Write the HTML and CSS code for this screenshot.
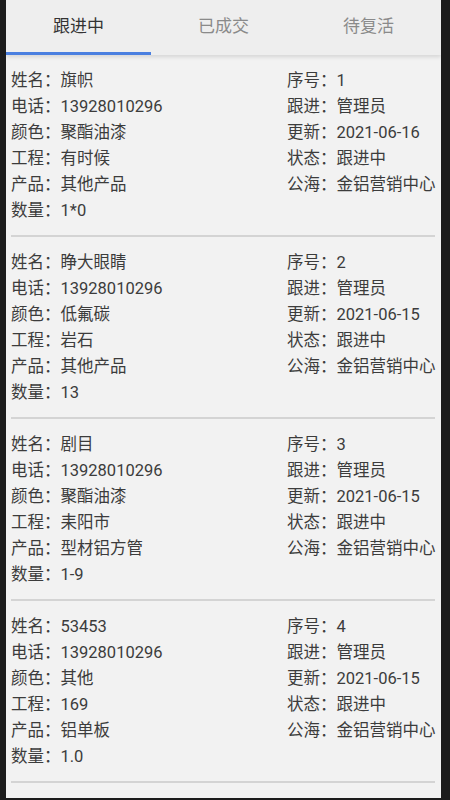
FILE: index.html
```html
<!DOCTYPE html>
<html lang="zh-CN">
<head>
    <meta charset="UTF-8">
    <meta name="viewport" content="width=device-width, initial-scale=1.0">
    <title>客户跟进</title>
    <link rel="stylesheet" href="styles.css">
</head>
<body>
    <div class="screen">
        <header class="tabs">
            <div class="tab active">跟进中</div>
            <div class="tab">已成交</div>
            <div class="tab">待复活</div>
        </header>

        <main class="list">
            <div class="card">
                <div class="col col-left">
                    <p>姓名：旗帜</p>
                    <p>电话：13928010296</p>
                    <p>颜色：聚酯油漆</p>
                    <p>工程：有时候</p>
                    <p>产品：其他产品</p>
                    <p>数量：1*0</p>
                </div>
                <div class="col col-right">
                    <p>序号：1</p>
                    <p>跟进：管理员</p>
                    <p>更新：2021-06-16</p>
                    <p>状态：跟进中</p>
                    <p>公海：金铝营销中心</p>
                </div>
            </div>

            <div class="card">
                <div class="col col-left">
                    <p>姓名：睁大眼睛</p>
                    <p>电话：13928010296</p>
                    <p>颜色：低氟碳</p>
                    <p>工程：岩石</p>
                    <p>产品：其他产品</p>
                    <p>数量：13</p>
                </div>
                <div class="col col-right">
                    <p>序号：2</p>
                    <p>跟进：管理员</p>
                    <p>更新：2021-06-15</p>
                    <p>状态：跟进中</p>
                    <p>公海：金铝营销中心</p>
                </div>
            </div>

            <div class="card">
                <div class="col col-left">
                    <p>姓名：剧目</p>
                    <p>电话：13928010296</p>
                    <p>颜色：聚酯油漆</p>
                    <p>工程：耒阳市</p>
                    <p>产品：型材铝方管</p>
                    <p>数量：1-9</p>
                </div>
                <div class="col col-right">
                    <p>序号：3</p>
                    <p>跟进：管理员</p>
                    <p>更新：2021-06-15</p>
                    <p>状态：跟进中</p>
                    <p>公海：金铝营销中心</p>
                </div>
            </div>

            <div class="card">
                <div class="col col-left">
                    <p>姓名：53453</p>
                    <p>电话：13928010296</p>
                    <p>颜色：其他</p>
                    <p>工程：169</p>
                    <p>产品：铝单板</p>
                    <p>数量：1.0</p>
                </div>
                <div class="col col-right">
                    <p>序号：4</p>
                    <p>跟进：管理员</p>
                    <p>更新：2021-06-15</p>
                    <p>状态：跟进中</p>
                    <p>公海：金铝营销中心</p>
                </div>
            </div>
        </main>
    </div>
</body>
</html>
```

FILE: styles.css
```css
* {
    margin: 0;
    padding: 0;
    box-sizing: border-box;
}

html, body {
    height: 100%;
    overflow: hidden;
}

body {
    background-color: #1c1c1c;
    font-family: Roboto, "Noto Sans CJK SC", sans-serif;
    color: #3c3c3c;
}

.screen {
    height: 798px;
    margin: 0 9px 0 6px;
    background-color: #f2f2f2;
    overflow: hidden;
}

.tabs {
    display: flex;
    height: 55px;
    background-color: #eeeeee;
    box-shadow: 0 2px 4px rgba(0,0,0,0.12);
    position: relative;
}

.tab {
    flex: 1;
    display: flex;
    align-items: center;
    justify-content: center;
    padding-bottom: 4px;
    font-size: 17px;
    color: #8a8a8a;
    border-bottom: 3px solid transparent;
}

.tab.active {
    color: #333;
    border-bottom-color: #4a7fe0;
}

.list {
    padding: 0 6px 0 5px;
}

.card {
    display: flex;
    padding: 13px 0 11px;
    border-bottom: 2px solid #d4d4d4;
}

.col p {
    height: 26px;
    line-height: 26px;
    font-size: 16.5px;
    white-space: nowrap;
}

.col-left {
    flex: 1;
}

.col-right {
    width: 148px;
}
```
